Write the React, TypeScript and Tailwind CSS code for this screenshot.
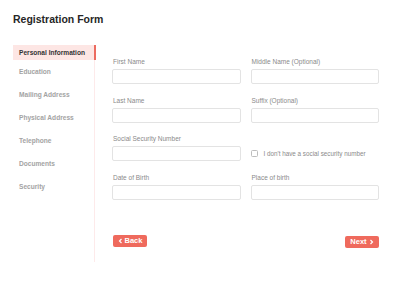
const steps = [
  "Personal Information",
  "Education",
  "Mailing Address",
  "Physical Address",
  "Telephone",
  "Documents",
  "Security",
];

function Field({ label }: { label: string }) {
  return (
    <div className="flex flex-col">
      <span className="h-[9px] text-[6.5px] leading-[9px] text-[#8a8a8a] mb-[3px] pl-[1px]">{label}</span>
      <div className="h-[15px] rounded-[2px] border border-[#e3e3e3] bg-white" />
    </div>
  );
}

export default function App() {
  return (
    <div className="w-[400px] h-[300px] bg-white overflow-hidden px-[13px] pt-[12px]" style={{ fontFamily: '"Liberation Sans", Arial, sans-serif' }}>
      <h1 className="text-[10.5px] leading-[14px] font-bold text-[#262626]">Registration Form</h1>

      <div className="flex mt-[19px]">
        {/* steps */}
        <div className="w-[82px] h-[217px] shrink-0 border-r border-[#fdeaea] flex flex-col">
          {steps.map((s, i) =>
            i === 0 ? (
              <div key={s} className="relative h-[15px] bg-[#fde6e4] flex items-center pl-[6px] text-[6.6px] font-bold text-[#333]">
                {s}
                <div className="absolute right-[-2px] top-0 bottom-0 w-[2px] bg-[#ec6b60]" />
              </div>
            ) : (
              <div key={s} className="h-[23px] flex items-center pl-[6px] text-[6.6px] font-bold text-[#a3a3a3]">
                {s}
              </div>
            )
          )}
        </div>

        {/* form */}
        <div className="flex-1 pl-[17px] pr-[8px] pt-[12px] flex flex-col">
          <div className="grid grid-cols-2 gap-x-[10px] gap-y-[11.5px] w-[267px]">
            <Field label="First Name" />
            <Field label="Middle Name (Optional)" />
            <Field label="Last Name" />
            <Field label="Suffix (Optional)" />
            <Field label="Social Security Number" />
            <div className="flex items-end">
              <div className="h-[15px] flex items-center gap-[6px]">
                <div className="w-[7px] h-[7px] rounded-[1.5px] border border-[#bdbdbd]" />
                <span className="text-[6.3px] text-[#8a8a8a]">I don't have a social security number</span>
              </div>
            </div>
            <Field label="Date of Birth" />
            <Field label="Place of birth" />
          </div>

          <div className="flex justify-between w-[267px] mt-[35px]">
            <button className="h-[12px] w-[34px] rounded-[2px] bg-[#ef6a5d] text-white text-[7.5px] font-bold flex items-center justify-center gap-[2px] ml-[1px]">
              <svg width="5" height="6" viewBox="0 0 5 6" fill="none"><path d="M3.5 1 L1.5 3 L3.5 5" stroke="white" strokeWidth="1.2" /></svg>
              Back
            </button>
            <button className="h-[12px] w-[34px] rounded-[2px] bg-[#ef6a5d] text-white text-[7.5px] font-bold flex items-center justify-center gap-[2px] mt-[1px]">
              Next
              <svg width="5" height="6" viewBox="0 0 5 6" fill="none"><path d="M1.5 1 L3.5 3 L1.5 5" stroke="white" strokeWidth="1.2" /></svg>
            </button>
          </div>
        </div>
      </div>
    </div>
  );
}
